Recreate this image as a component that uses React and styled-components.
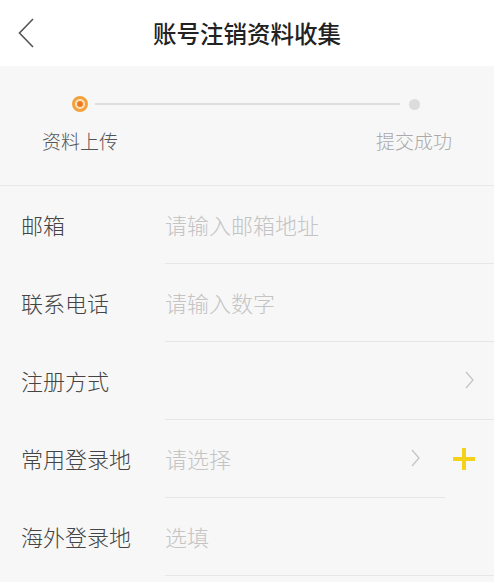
import React from "react";
import styled, { createGlobalStyle } from "styled-components";

const Global = createGlobalStyle`
  html, body { margin: 0; padding: 0; background: #f7f7f7; }
  body { font-family: "Noto Sans CJK SC", "Noto Sans", sans-serif; }
  * { box-sizing: border-box; }
`;

const Page = styled.div`
  width: 494px;
  min-height: 582px;
  background: #f7f7f7;
  overflow: hidden;
`;

const Header = styled.header`
  height: 66px;
  background: #ffffff;
  display: flex;
  align-items: center;
  justify-content: center;
  position: relative;
`;

const BackButton = styled.button`
  position: absolute;
  left: 12px;
  top: 16px;
  width: 28px;
  height: 34px;
  border: 0;
  background: transparent;
  padding: 0;
  display: flex;
  align-items: center;
  justify-content: center;
`;

const Title = styled.h1`
  margin: 0;
  font-size: 23.5px;
  font-weight: 500;
  color: #222;
  letter-spacing: 0;
`;

const Steps = styled.section`
  height: 120px;
  border-bottom: 1.5px solid #e8e8e8;
  display: flex;
  padding: 29px 42px 0;
`;

const StepItem = styled.div`
  width: 76px;
  display: flex;
  flex-direction: column;
  align-items: center;
  position: relative;
  z-index: 1;
`;

const DotBox = styled.div`
  height: 18px;
  display: flex;
  align-items: center;
  justify-content: center;
`;

const ActiveDot = styled.span`
  width: 16px;
  height: 16px;
  border-radius: 50%;
  border: 3px solid #f2a33d;
  background: #fbe3c4;
  display: flex;
  align-items: center;
  justify-content: center;
  &::after {
    content: "";
    width: 6px;
    height: 6px;
    border-radius: 50%;
    background: #f07b1c;
  }
`;

const IdleDot = styled.span`
  width: 11px;
  height: 11px;
  border-radius: 50%;
  background: #dcdcdc;
`;

const Connector = styled.div`
  flex: 1;
  height: 1.5px;
  background: #dedede;
  margin: 8px -24px 0 -23px;
`;

const StepLabel = styled.span`
  margin-top: 15px;
  font-size: 19px;
  font-weight: 300;
  line-height: 26px;
  color: ${(p) => (p.$active ? "#555" : "#aaa")};
  white-space: nowrap;
`;

const Form = styled.section`
  display: flex;
  flex-direction: column;
`;

const Row = styled.div`
  display: flex;
  height: 78px;
`;

const Label = styled.div`
  width: 165px;
  padding-left: 21px;
  padding-bottom: 2px;
  display: flex;
  align-items: center;
  font-size: 22px;
  font-weight: 300;
  color: #444;
  white-space: nowrap;
`;

const Field = styled.div`
  flex: 1;
  display: flex;
  align-items: center;
  border-bottom: 1.5px solid #e6e6e6;
  padding-right: ${(p) => p.$pr || 20}px;
  padding-bottom: 2px;
`;

const Placeholder = styled.span`
  flex: 1;
  font-size: 22px;
  font-weight: 300;
  color: #c4c4c4;
  white-space: nowrap;
`;

const Extra = styled.div`
  width: 49px;
  display: flex;
  align-items: center;
  padding-left: 8px;
`;

const Chevron = () => (
  <svg width="9" height="18" viewBox="0 0 9 18">
    <path d="M1 1 L8 9 L1 17" fill="none" stroke="#c4c4c4" strokeWidth="1.3" />
  </svg>
);

const Plus = () => (
  <svg width="22" height="22" viewBox="0 0 22 22">
    <path d="M11 0 V22 M0 11 H22" stroke="#f4d21c" strokeWidth="4" />
  </svg>
);

const rows = [
  { label: "邮箱", ph: "请输入邮箱地址" },
  { label: "联系电话", ph: "请输入数字" },
  { label: "注册方式", ph: "", arrow: true },
  { label: "常用登录地", ph: "请选择", arrow: true, plus: true, pr: 25 },
  { label: "海外登录地", ph: "选填" },
];

export default function App() {
  return (
    <Page>
      <Global />
      <Header>
        <BackButton aria-label="back">
          <svg width="16" height="30" viewBox="0 0 16 30">
            <path d="M15 1 L1.5 15 L15 29" fill="none" stroke="#555" strokeWidth="1.6" />
          </svg>
        </BackButton>
        <Title>账号注销资料收集</Title>
      </Header>
      <Steps>
        <StepItem>
          <DotBox>
            <ActiveDot />
          </DotBox>
          <StepLabel $active>资料上传</StepLabel>
        </StepItem>
        <Connector />
        <StepItem>
          <DotBox>
            <IdleDot />
          </DotBox>
          <StepLabel>提交成功</StepLabel>
        </StepItem>
      </Steps>
      <Form>
        {rows.map((r) => (
          <Row key={r.label}>
            <Label>{r.label}</Label>
            <Field $pr={r.pr}>
              <Placeholder>{r.ph}</Placeholder>
              {r.arrow && <Chevron />}
            </Field>
            {r.plus && (
              <Extra>
                <Plus />
              </Extra>
            )}
          </Row>
        ))}
      </Form>
    </Page>
  );
}
